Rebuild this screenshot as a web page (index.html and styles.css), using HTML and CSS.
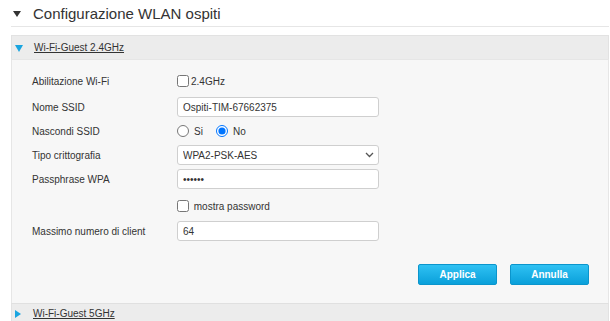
FILE: index.html
```html
<!DOCTYPE html>
<html lang="it">
<head>
    <meta charset="UTF-8">
    <meta name="viewport" content="width=device-width, initial-scale=1.0">
    <title>Configurazione WLAN ospiti</title>
    <link rel="stylesheet" href="styles.css">
</head>
<body>
    <div class="page">
        <div class="section-title">
            <span class="arrow-down"></span>
            <span>Configurazione WLAN ospiti</span>
        </div>

        <div class="acc-header">
            <span class="tri-down"></span>
            <a href="#">Wi-Fi-Guest 2.4GHz</a>
        </div>
        <div class="acc-body">
            <div class="row">
                <label class="lbl">Abilitazione Wi-Fi</label>
                <label class="check"><input type="checkbox"> 2.4GHz</label>
            </div>
            <div class="row">
                <label class="lbl">Nome SSID</label>
                <input class="field" type="text" value="Ospiti-TIM-67662375">
            </div>
            <div class="row">
                <label class="lbl">Nascondi SSID</label>
                <label class="radio"><input type="radio" name="hide"> Si</label>
                <label class="radio"><input type="radio" name="hide" checked> No</label>
            </div>
            <div class="row">
                <label class="lbl">Tipo crittografia</label>
                <div class="select-wrap">
                    <select class="field">
                        <option>WPA2-PSK-AES</option>
                    </select>
                    <svg class="chevron" width="9" height="6" viewBox="0 0 9 6">
                        <path d="M1 1 L4.5 4.5 L8 1" fill="none" stroke="#555" stroke-width="1.3"/>
                    </svg>
                </div>
            </div>
            <div class="row">
                <label class="lbl">Passphrase WPA</label>
                <input class="field" type="password" value="abcdef">
            </div>
            <div class="row row-gap">
                <span class="lbl"></span>
                <label class="check"><input type="checkbox"> &nbsp;mostra password</label>
            </div>
            <div class="row row-last">
                <label class="lbl">Massimo numero di client</label>
                <input class="field" type="text" value="64">
            </div>
            <div class="actions">
                <button class="btn">Applica</button>
                <button class="btn">Annulla</button>
            </div>
        </div>

        <div class="acc-header closed">
            <span class="tri-right"></span>
            <a href="#">Wi-Fi-Guest 5GHz</a>
        </div>
    </div>
</body>
</html>
```

FILE: styles.css
```css
body {
    margin: 0;
    background-color: #fff;
    font-family: "Liberation Sans", Arial, sans-serif;
    color: #333;
}

.page {
    padding: 0 1px 0 11px;
}

.section-title {
    display: flex;
    align-items: center;
    height: 26px;
    border-bottom: 1px solid #e6e6e6;
    font-size: 15px;
    color: #333;
}

.arrow-down {
    width: 0;
    height: 0;
    margin: 2px 12px 0 2px;
    border-left: 4px solid transparent;
    border-right: 4px solid transparent;
    border-top: 6px solid #333;
}

.acc-header {
    display: flex;
    align-items: center;
    height: 23px;
    margin-top: 8px;
    background-color: #ececec;
    border: 1px solid #e2e2e2;
    border-bottom: none;
    font-size: 10px;
}

.acc-header a {
    color: #333;
    text-decoration: underline;
}

.acc-header.closed {
    margin-top: 0;
    height: 18px;
    border-top: 1px solid #e0e0e0;
}

.tri-down {
    width: 0;
    height: 0;
    margin: 1px 11px 0 3px;
    border-left: 4px solid transparent;
    border-right: 4px solid transparent;
    border-top: 7px solid #1aa5e0;
}

.tri-right {
    width: 0;
    height: 0;
    margin: 2px 12px 0 3px;
    border-top: 4px solid transparent;
    border-bottom: 4px solid transparent;
    border-left: 6px solid #1aa5e0;
}

.acc-body {
    background-color: #f7f7f7;
    border: 1px solid #e6e6e6;
    border-bottom: none;
    padding: 9px 19px 18px 20px;
    font-size: 10px;
}

.row {
    display: flex;
    align-items: center;
    height: 24px;
}

.row:nth-child(2) {
    margin-top: 2px;
}

.row-gap {
    margin-top: 3px;
}

.row-last {
    margin-top: 1px;
}

.lbl {
    width: 145px;
    flex-shrink: 0;
}

.check,
.radio {
    display: flex;
    align-items: center;
}

.check input {
    width: 12px;
    height: 12px;
    margin: 0 2px 0 0;
}

.radio input {
    width: 12px;
    height: 12px;
    margin: 0 5px 0 0;
}

.radio + .radio {
    margin-left: 13px;
}

.field {
    box-sizing: border-box;
    width: 202px;
    height: 20px;
    padding: 0 5px;
    border: 1px solid #cfcfcf;
    border-radius: 3px;
    background-color: #fff;
    font-family: "Liberation Sans", Arial, sans-serif;
    font-size: 10px;
    color: #333;
}

select.field {
    appearance: none;
    -webkit-appearance: none;
    padding-left: 5px;
}

.select-wrap {
    position: relative;
    display: flex;
}

.chevron {
    position: absolute;
    right: 5px;
    top: 7px;
}

.actions {
    display: flex;
    justify-content: flex-end;
    gap: 13px;
    margin-top: 21px;
}

.btn {
    width: 79px;
    height: 21px;
    border: 1px solid #0b95cc;
    border-radius: 2px;
    background: linear-gradient(#2fc1f3, #0aa0da);
    color: #fff;
    font-family: "Liberation Sans", Arial, sans-serif;
    font-size: 10px;
    font-weight: bold;
    cursor: pointer;
}
```
